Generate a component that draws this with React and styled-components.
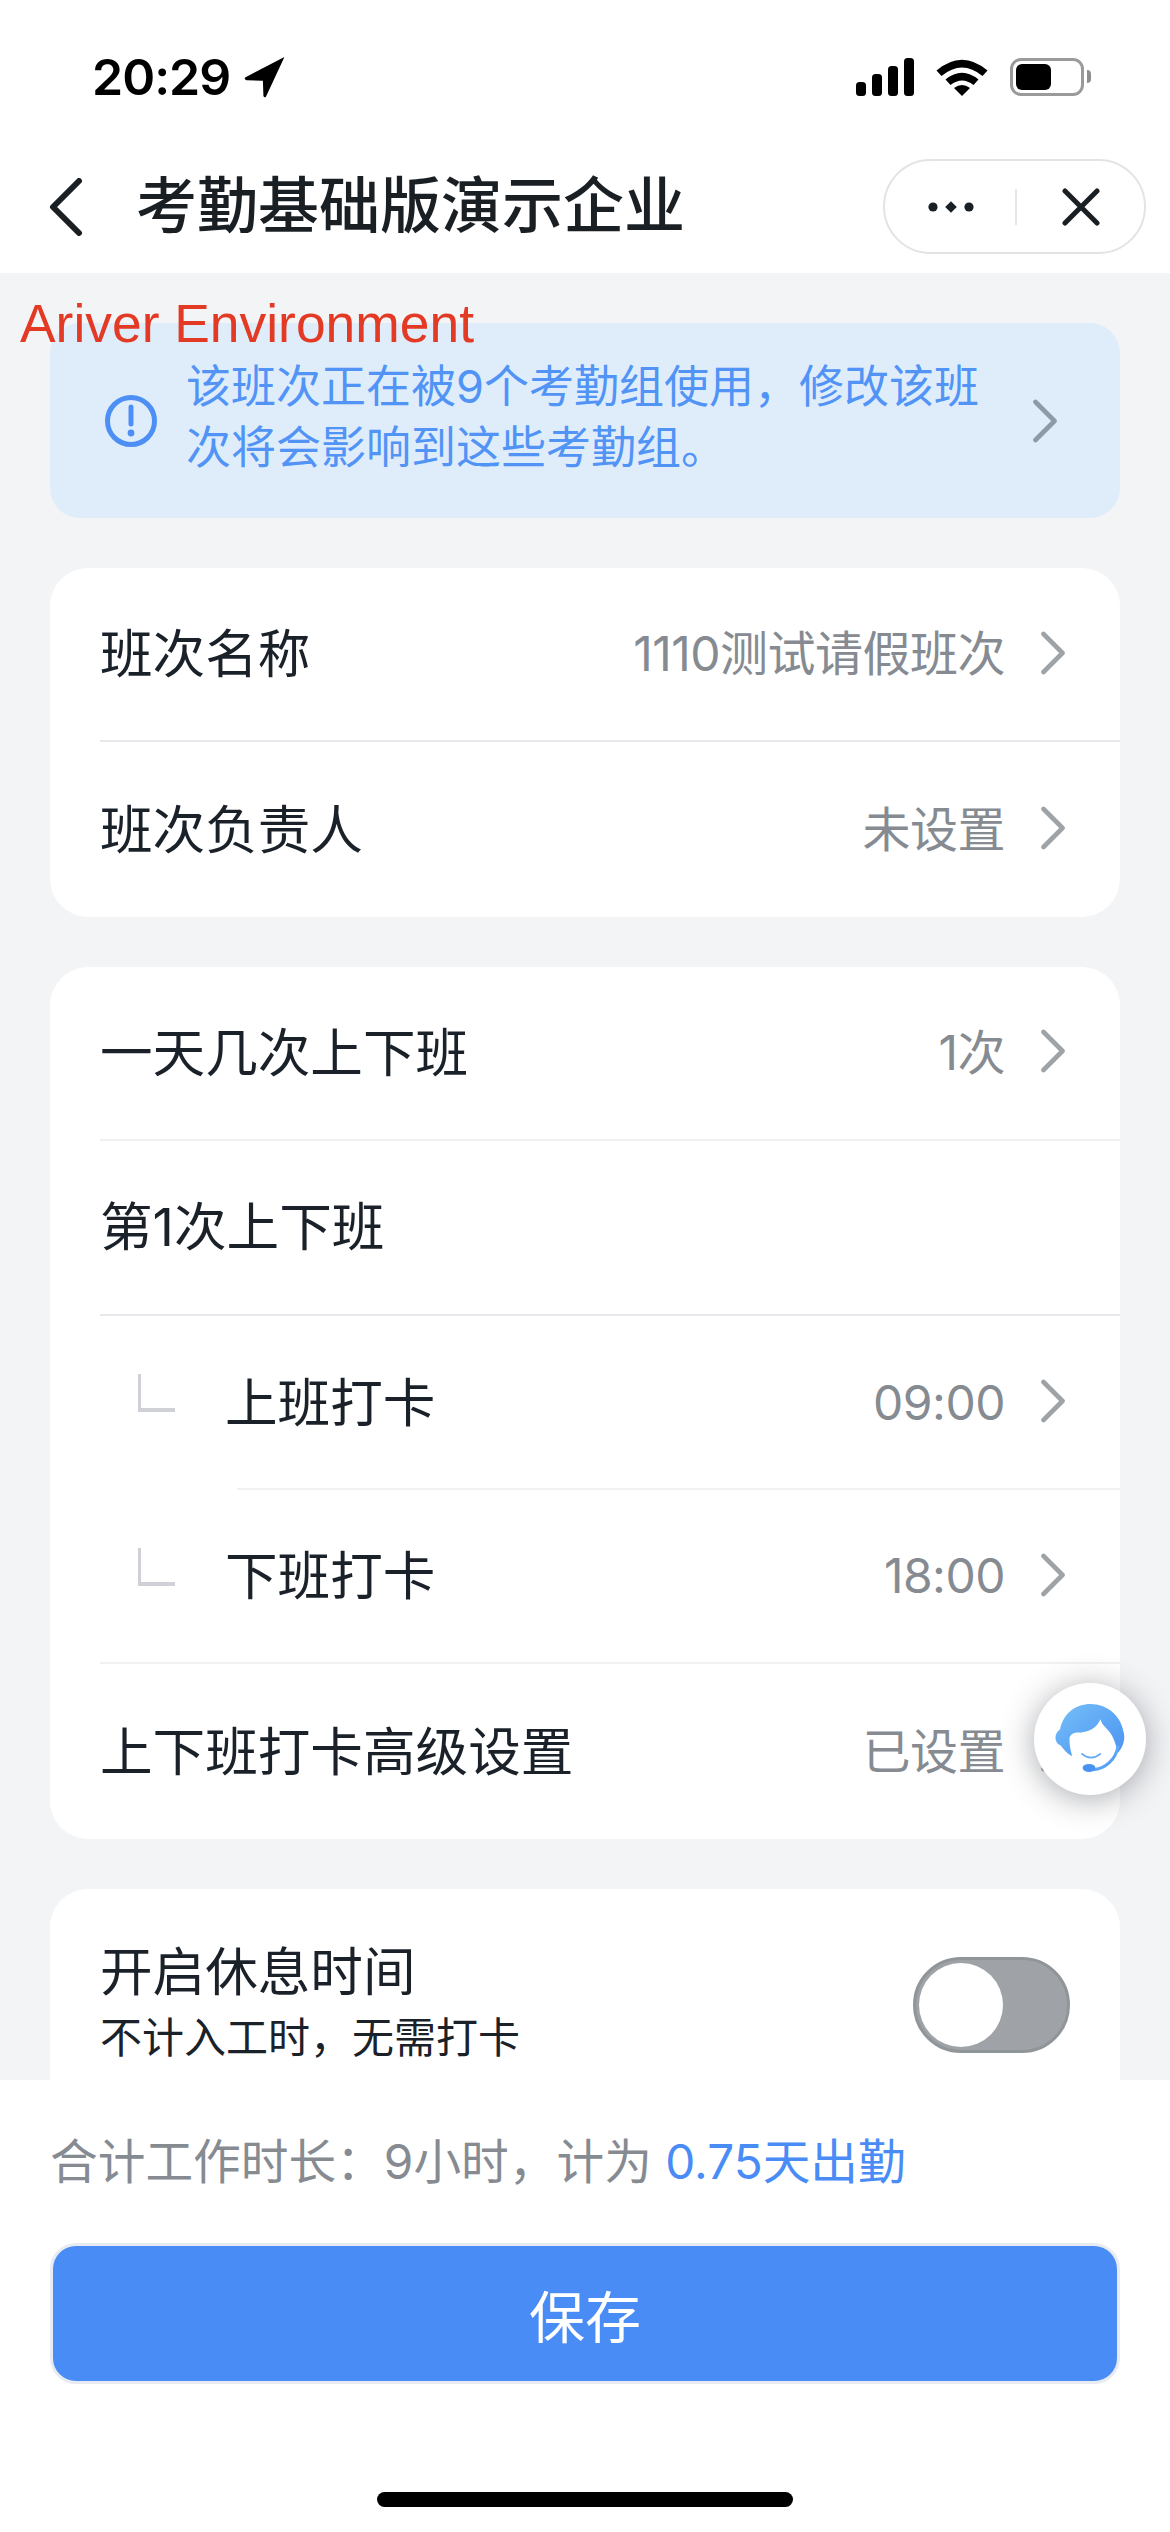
import React from "react";
import styled, { createGlobalStyle } from "styled-components";

const GlobalStyle = createGlobalStyle`
  html, body {
    margin: 0;
    padding: 0;
    background: #fff;
  }
  * {
    box-sizing: border-box;
  }
`;

const Chevron = ({ color = "#9ea3a8" }) => (
  <ChevronSvg viewBox="0 0 26 44" fill="none" stroke={color} strokeWidth="4.6" strokeLinecap="round" strokeLinejoin="round">
    <path d="M3.5 3 L22.5 22 L3.5 41" />
  </ChevronSvg>
);

const App = () => {
  return (
    <Page>
      <GlobalStyle />
      <Header>
        <StatusBar>
          <Clock>
            <span>20:29</span>
            <svg width="42" height="42" viewBox="0 0 40 40">
              <path d="M38.5 1 L1 20.5 Q0 22.5 2.5 23 L18 23.5 L18.5 38 Q19.5 40.5 21 38.5 Z" fill="#000" />
            </svg>
          </Clock>
          <StatusIcons>
            <svg width="58" height="38" viewBox="0 0 58 38" fill="#000">
              <rect x="0" y="24" width="10" height="14" rx="3.5" />
              <rect x="16" y="16" width="10" height="22" rx="3.5" />
              <rect x="32" y="8" width="10" height="30" rx="3.5" />
              <rect x="48" y="0" width="10" height="38" rx="3.5" />
            </svg>
            <svg width="52" height="38" viewBox="0 0 52 38" fill="#000">
              <path d="M0.5 12.5 Q26 -9 51.5 12.5 L46.5 18 Q26 1 5.5 18 Z" />
              <path d="M9.5 21.5 Q26 8 42.5 21.5 L37.5 27 Q26 18 14.5 27 Z" />
              <path d="M18 30 Q26 24 34 30 L26 38 Z" />
            </svg>
            <Battery>
              <BatteryFill />
              <BatteryNub />
            </Battery>
          </StatusIcons>
        </StatusBar>
        <NavBar>
          <svg width="34" height="58" viewBox="0 0 34 58" fill="none" stroke="#1a1f24" strokeWidth="6" strokeLinecap="round" strokeLinejoin="round">
            <path d="M30 3 L4 29 L30 55" />
          </svg>
          <NavTitle>考勤基础版演示企业</NavTitle>
          <Capsule>
            <svg width="48" height="14" viewBox="0 0 48 14" fill="#1a1f24">
              <circle cx="6" cy="7" r="4.6" />
              <path d="M24 1.2 L29.8 7 L24 12.8 L18.2 7 Z" />
              <circle cx="42" cy="7" r="4.6" />
            </svg>
            <CapsuleLine />
            <svg width="38" height="38" viewBox="0 0 38 38" fill="none" stroke="#1a1f24" strokeWidth="5" strokeLinecap="round">
              <path d="M3 3 L35 35 M35 3 L3 35" />
            </svg>
          </Capsule>
        </NavBar>
      </Header>

      <Content>
        <EnvTag>Ariver Environment</EnvTag>
        <Notice>
          <svg width="54" height="54" viewBox="0 0 54 54" fill="none">
            <circle cx="27" cy="27" r="23.5" stroke="#4e8ff5" strokeWidth="5" />
            <path d="M27 13 L27 30" stroke="#4e8ff5" strokeWidth="5" strokeLinecap="round" />
            <circle cx="27" cy="39" r="3.4" fill="#4e8ff5" />
          </svg>
          <NoticeText>该班次正在被9个考勤组使用，修改该班次将会影响到这些考勤组。</NoticeText>
          <Chevron color="#8e9aa8" />
        </Notice>

        <Card>
          <Row>
            <RowBody $strong>
              <Label>班次名称</Label>
              <Value>1110测试请假班次</Value>
              <Chevron />
            </RowBody>
          </Row>
          <Row>
            <RowBody $last>
              <Label>班次负责人</Label>
              <Value>未设置</Value>
              <Chevron />
            </RowBody>
          </Row>
        </Card>

        <Card>
          <Row>
            <RowBody>
              <Label>一天几次上下班</Label>
              <Value>1次</Value>
              <Chevron />
            </RowBody>
          </Row>
          <Row>
            <RowBody $strong>
              <Label>第1次上下班</Label>
            </RowBody>
          </Row>
          <Row>
            <Elbow />
            <RowBody $sub>
              <Label>上班打卡</Label>
              <Value>09:00</Value>
              <Chevron />
            </RowBody>
          </Row>
          <Row>
            <Elbow />
            <RowBody $sub $outdent>
              <Label>下班打卡</Label>
              <Value>18:00</Value>
              <Chevron />
            </RowBody>
          </Row>
          <Row>
            <RowBody $last>
              <Label>上下班打卡高级设置</Label>
              <Value>已设置</Value>
              <Chevron />
            </RowBody>
          </Row>
        </Card>

        <BreakCard>
          <BreakText>
            <Label>开启休息时间</Label>
            <BreakHint>不计入工时，无需打卡</BreakHint>
          </BreakText>
          <Toggle>
            <Knob />
          </Toggle>
        </BreakCard>

        <ServiceButton>
          <svg width="70" height="70" viewBox="285 195 208 208">
            <defs>
              <linearGradient id="agent" x1="0" y1="0" x2="1" y2="1">
                <stop offset="0" stopColor="#76c0f8" />
                <stop offset="1" stopColor="#4a92f2" />
              </linearGradient>
            </defs>
            <path
              fill="url(#agent)"
              d="M300 270 C310 220 350 195 390 195 C440 195 480 230 488 275 C496 300 486 325 472 340 C466 318 460 290 442 272 C430 260 422 250 420 240 C410 265 385 280 350 280 C335 282 328 290 328 300 C328 320 332 335 336 350 C320 342 310 328 302 318 C283 312 280 285 300 270 Z"
            />
            <path d="M472 322 C465 360 435 388 398 390" fill="none" stroke="url(#agent)" strokeWidth="9" strokeLinecap="round" />
            <ellipse cx="386" cy="385" rx="19" ry="12" fill="#4a92f2" />
            <path d="M365 343 Q392 366 420 343" fill="none" stroke="#62a8f5" strokeWidth="5" strokeLinecap="round" />
          </svg>
        </ServiceButton>
      </Content>

      <Footer>
        <Summary>
          合计工作时长：9小时，计为 <SummaryHighlight>0.75天出勤</SummaryHighlight>
        </Summary>
        <SaveButton>保存</SaveButton>
        <HomeIndicator />
      </Footer>
    </Page>
  );
};

// Inter first so the digits come out proportional, the CJK glyphs drop through to Noto
const fontStack = `Inter, "Noto Sans CJK SC", "Noto Sans", sans-serif`;

const Page = styled.div`
  width: 1170px;
  height: 2532px;
  display: flex;
  flex-direction: column;
  overflow: hidden;
  font-family: ${fontStack};
  color: #1a2129;
`;

const Header = styled.header`
  height: 273px;
  flex: none;
  background: #fff;
  display: flex;
  flex-direction: column;
`;

const StatusBar = styled.div`
  height: 159px;
  padding: 58px 79px 0 92px;
  display: flex;
  justify-content: space-between;
  align-items: flex-start;
`;

const Clock = styled.div`
  display: flex;
  align-items: center;
  gap: 14px;
  height: 38px;
  font-family: Inter, "Liberation Sans", sans-serif;
  font-weight: 600;
  font-size: 50px;
  letter-spacing: -1px;
  color: #000;
`;

const StatusIcons = styled.div`
  display: flex;
  align-items: center;
  gap: 22px;
`;

const Battery = styled.div`
  position: relative;
  width: 74px;
  height: 38px;
  border: 3px solid #9a9a9a;
  border-radius: 11px;
  padding: 3px;
  margin-right: 7px;
`;

const BatteryFill = styled.div`
  width: 35px;
  height: 100%;
  background: #000;
  border-radius: 6px;
`;

const BatteryNub = styled.div`
  position: absolute;
  right: -10px;
  top: 9px;
  width: 4px;
  height: 13px;
  border-radius: 0 4px 4px 0;
  background: #8e8e8e;
`;

const NavBar = styled.div`
  flex: 1;
  padding: 0 24px 19px 49px;
  display: flex;
  align-items: center;
`;

const NavTitle = styled.h1`
  flex: 1;
  margin: 0 0 2px 53px;
  font-size: 61px;
  font-weight: 500;
  line-height: 80px;
  color: #1a1f24;
`;

const Capsule = styled.div`
  width: 263px;
  height: 95px;
  border: 2px solid #e3e3e3;
  border-radius: 48px;
  background: #fff;
  display: flex;
  align-items: center;
  padding-left: 42px;
`;

const CapsuleLine = styled.div`
  width: 2px;
  height: 36px;
  background: #e6e6e6;
  margin: 0 45px 0 40px;
`;

const Content = styled.main`
  position: relative;
  flex: 1;
  min-height: 0;
  overflow: hidden;
  background: #f3f4f6;
  padding: 50px 50px 0;
  display: flex;
  flex-direction: column;
  gap: 50px;
`;

const EnvTag = styled.div`
  position: absolute;
  left: 20px;
  top: 20px;
  font-family: "Liberation Sans", Arial, sans-serif;
  font-size: 53.4px;
  line-height: 62px;
  color: #e33a25;
  z-index: 2;
`;

const Notice = styled.div`
  flex: none;
  height: 195px;
  border-radius: 30px;
  background: #dfedfb;
  display: flex;
  align-items: center;
  padding: 0 62px 0 54px;
`;

const NoticeText = styled.p`
  flex: 1;
  margin: 0 36px 8px 28px;
  font-size: 45px;
  line-height: 61px;
  color: #5294f6;
`;

const ChevronSvg = styled.svg`
  flex: none;
  width: 26px;
  height: 44px;
`;

const Card = styled.section`
  flex: none;
  background: #fff;
  border-radius: 38px;
  overflow: hidden;
`;

const Row = styled.div`
  position: relative;
  height: 174.4px;
  padding-left: 50px;
  display: flex;
`;

const Elbow = styled.div`
  position: absolute;
  left: 88px;
  top: 58px;
  width: 37px;
  height: 38px;
  border-left: 3px solid #cfd1d7;
  border-bottom: 4px solid #cfd1d7;
`;

const RowBody = styled.div`
  flex: 1;
  min-width: 0;
  display: flex;
  align-items: center;
  padding-right: 54px;
  padding-left: ${(props) => (props.$sub ? "125px" : "0")};
  ${(props) =>
    !props.$last &&
    `border-bottom: 2px solid ${props.$strong ? "#e6e8eb" : "#f0f1f3"};`}
  ${(props) => props.$sub && !props.$outdent && `
    border-bottom: none;
    background: linear-gradient(#f0f1f3, #f0f1f3) 137px 100% / 100% 2px no-repeat;
  `}

  ${ChevronSvg} {
    margin-bottom: 3px;
  }
`;

const Label = styled.div`
  flex: 1;
  font-size: 52.6px;
  line-height: 72px;
  color: #1a2129;
`;

const Value = styled.div`
  font-size: 48px;
  line-height: 66px;
  letter-spacing: -0.5px;
  color: #868b92;
  margin-right: 35px;
`;

const BreakCard = styled.section`
  flex: none;
  height: 240px;
  background: #fff;
  border-radius: 38px;
  display: flex;
  align-items: flex-start;
  justify-content: space-between;
  padding: 47px 50px 0;
`;

const BreakText = styled.div`
  display: flex;
  flex-direction: column;
`;

const BreakHint = styled.div`
  font-size: 42px;
  line-height: 60px;
  color: #1a2129;
`;

const Toggle = styled.div`
  width: 157px;
  height: 96px;
  margin-top: 21px;
  border: 3px solid #90959a;
  border-radius: 48px;
  background: #9fa3a8;
  padding: 3px;
`;

const Knob = styled.div`
  width: 84px;
  height: 84px;
  border-radius: 50%;
  background: #fff;
`;

const ServiceButton = styled.div`
  position: absolute;
  left: 1034px;
  top: 1410px;
  width: 112px;
  height: 112px;
  border-radius: 50%;
  background: #fff;
  box-shadow: 0 4px 32px rgba(50, 55, 65, 0.42);
  display: flex;
  align-items: center;
  justify-content: center;
`;

const Footer = styled.footer`
  height: 452px;
  flex: none;
  background: #fff;
  padding: 48px 50px 0;
  display: flex;
  flex-direction: column;
`;

const Summary = styled.div`
  height: 68px;
  font-size: 47.7px;
  line-height: 68px;
  color: #868b92;
`;

const SummaryHighlight = styled.span`
  color: #4a8cf6;
`;

const SaveButton = styled.button`
  width: 100%;
  height: 141px;
  margin-top: 47px;
  flex: none;
  border: 3px solid #e8ecf2;
  border-radius: 26px;
  background: #4a8cf6;
  color: #fff;
  font-family: ${fontStack};
  font-size: 56px;
  padding: 0;
`;

const HomeIndicator = styled.div`
  width: 416px;
  height: 15px;
  margin: 108px auto 0;
  border-radius: 8px;
  background: #000;
`;

export default App;
